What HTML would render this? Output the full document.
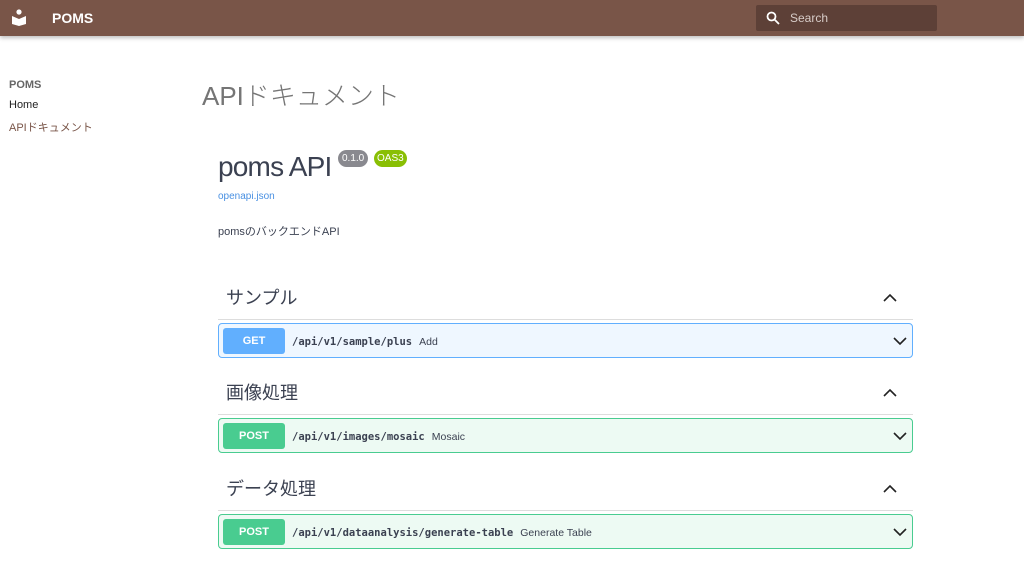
<!DOCTYPE html>
<html><head><meta charset="utf-8"><style>
*{box-sizing:border-box;margin:0;padding:0}
body{width:1024px;height:580px;overflow:hidden;background:#fff;font-family:"Liberation Sans","Noto Sans CJK JP",sans-serif;position:relative}
.hdr{position:absolute;left:0;top:0;width:1024px;height:36px;background:#795548;box-shadow:0 2px 4px rgba(0,0,0,.25)}
.hdr .t{position:absolute;left:52px;top:10px;color:#fff;font-weight:bold;font-size:14px}
.search{position:absolute;left:756px;top:5px;width:181px;height:26px;background:#5d4037;border-radius:2px}
.search span{position:absolute;left:34px;top:6px;color:#d7ccc8;font-size:12px}
.nav{position:absolute;left:9px;font-size:11px}
.a{position:absolute}
.sec{position:absolute;left:218px;width:695px}
.sec h3{font-weight:normal;font-size:18px;color:#3b4151;padding-left:8px;height:24px;line-height:24px}
.sec .ln{position:absolute;top:33px;left:0;right:0;height:1px;background:#ddd}
.chev{position:absolute;right:16px;top:7px}
.op{position:absolute;left:0;top:37px;width:695px;height:35px;border:1px solid;border-radius:4px}
.m{position:absolute;left:4px;top:4px;width:62px;height:26px;border-radius:3px;color:#fff;font-weight:bold;font-size:11px;text-align:center;line-height:26px}
.p{position:absolute;left:73px;top:12px;font-family:"DejaVu Sans Mono",monospace;font-weight:bold;font-size:10.5px;color:#3b4151}
.d{font-family:"Liberation Sans",sans-serif;font-weight:normal;font-size:10.5px;margin-left:7px}
.dn{position:absolute;right:5px;top:12px}
</style></head><body>
<div class="hdr">
<svg style="position:absolute;left:11px;top:9px" width="16" height="17" viewBox="0 0 16 17"><circle cx="8" cy="3" r="2.6" fill="#fff"/><path d="M1 7 L8 10 L15 7 L15 15 L8 17 L1 15Z" fill="#fff"/></svg>
<div class="t">POMS</div>
<div class="search"><svg style="position:absolute;left:10px;top:6px" width="14" height="14" viewBox="0 0 14 14"><circle cx="5.5" cy="5.5" r="4" stroke="#fff" stroke-width="1.8" fill="none"/><path d="M8.5 8.5L13 13" stroke="#fff" stroke-width="1.8"/></svg><span>Search</span></div>
</div>
<div class="nav" style="top:79px;color:#666;font-weight:bold">POMS</div>
<div class="nav" style="top:99px;color:#222">Home</div>
<div class="nav" style="top:119px;color:#795548">APIドキュメント</div>
<div class="a" style="left:202px;top:76px;font-size:26px;color:#757575;font-weight:300">APIドキュメント</div>
<div class="a" style="left:218px;top:151px;font-size:28px;color:#3b4151;letter-spacing:-0.8px">poms API</div>
<div class="a" style="left:338px;top:150px;background:#89898f;color:#fff;font-size:10px;padding:3px 4px;border-radius:9px">0.1.0</div>
<div class="a" style="left:374px;top:150px;background:#89bf04;color:#fff;font-size:10px;padding:3px 3px;border-radius:9px">OAS3</div>
<div class="a" style="left:218px;top:191px;font-size:10px;color:#4990e2">openapi.json</div>
<div class="a" style="left:218px;top:223px;font-size:11px;color:#3b4151">pomsのバックエンドAPI</div>

<div class="sec" style="top:286px"><h3>サンプル</h3><div class="ln"></div>
<svg class="chev" width="14" height="10" viewBox="0 0 14 10"><path d="M1 8L7 2L13 8" stroke="#222" stroke-width="1.6" fill="none"/></svg>
<div class="op" style="background:#eff7ff;border-color:#61affe"><div class="m" style="background:#61affe">GET</div><div class="p">/api/v1/sample/plus<span class="d">Add</span></div><svg class="dn" width="14" height="10" viewBox="0 0 14 10"><path d="M1 2L7 8L13 2" stroke="#222" stroke-width="1.6" fill="none"/></svg></div></div>

<div class="sec" style="top:381px"><h3>画像処理</h3><div class="ln"></div>
<svg class="chev" width="14" height="10" viewBox="0 0 14 10"><path d="M1 8L7 2L13 8" stroke="#222" stroke-width="1.6" fill="none"/></svg>
<div class="op" style="background:#edfaf3;border-color:#49cc90"><div class="m" style="background:#49cc90">POST</div><div class="p">/api/v1/images/mosaic<span class="d">Mosaic</span></div><svg class="dn" width="14" height="10" viewBox="0 0 14 10"><path d="M1 2L7 8L13 2" stroke="#222" stroke-width="1.6" fill="none"/></svg></div></div>

<div class="sec" style="top:477px"><h3>データ処理</h3><div class="ln"></div>
<svg class="chev" width="14" height="10" viewBox="0 0 14 10"><path d="M1 8L7 2L13 8" stroke="#222" stroke-width="1.6" fill="none"/></svg>
<div class="op" style="background:#edfaf3;border-color:#49cc90"><div class="m" style="background:#49cc90">POST</div><div class="p">/api/v1/dataanalysis/generate-table<span class="d">Generate Table</span></div><svg class="dn" width="14" height="10" viewBox="0 0 14 10"><path d="M1 2L7 8L13 2" stroke="#222" stroke-width="1.6" fill="none"/></svg></div></div>
</body></html>
